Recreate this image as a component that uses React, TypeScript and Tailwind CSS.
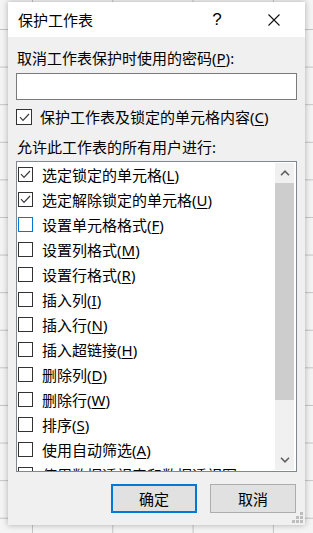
import React from 'react';

type Item = { text: string; key: string; checked?: boolean; focus?: boolean };

const items: Item[] = [
  { text: '选定锁定的单元格', key: 'L', checked: true },
  { text: '选定解除锁定的单元格', key: 'U', checked: true },
  { text: '设置单元格格式', key: 'F', focus: true },
  { text: '设置列格式', key: 'M' },
  { text: '设置行格式', key: 'R' },
  { text: '插入列', key: 'I' },
  { text: '插入行', key: 'N' },
  { text: '插入超链接', key: 'H' },
  { text: '删除列', key: 'D' },
  { text: '删除行', key: 'W' },
  { text: '排序', key: 'S' },
  { text: '使用自动筛选', key: 'A' },
  { text: '使用数据透视表和数据透视图', key: 'Z' },
  { text: '编辑对象', key: 'O' },
  { text: '编辑方案', key: 'E' },
];

const Check = () => (
  <svg width="11" height="9" viewBox="0 0 11 9">
    <path d="M1 4.2 L4 7.3 L10 1" stroke="#3a3a3a" strokeWidth="1.2" fill="none" />
  </svg>
);

const Box = ({ checked, focus, big }: { checked?: boolean; focus?: boolean; big?: boolean }) => (
  <span
    className={`${big ? 'w-[16px] h-[16px]' : 'w-[15px] h-[15px]'} ${
      focus ? 'border-[#0078d7]' : 'border-[#333333]'
    } border bg-white flex items-center justify-center shrink-0`}
  >
    {checked && <Check />}
  </span>
);

const Label = ({ text, k, tail = '' }: { text: string; k: string; tail?: string }) => (
  <span className="whitespace-nowrap">
    {text}(<u className="underline-offset-2">{k}</u>){tail}
  </span>
);

const Chevron = ({ up }: { up?: boolean }) => (
  <svg width="10" height="6" viewBox="0 0 10 6">
    <path
      d={up ? 'M1 5.2 L5 1.2 L9 5.2' : 'M1 0.8 L5 4.8 L9 0.8'}
      stroke="#606060"
      strokeWidth="1.6"
      fill="none"
    />
  </svg>
);

export default function App() {
  return (
    <div className="w-[313px] h-[533px] overflow-hidden bg-[#f4f4f4] [background-image:linear-gradient(to_bottom,#c4c4c4_1px,transparent_1px),linear-gradient(to_right,#c4c4c4_1px,transparent_1px)] [background-size:80.3px_37.6px] [background-position:32px_29px] pt-[2px] pl-[8px] font-['Noto_Sans','Noto_Sans_CJK_SC',sans-serif] text-[15px] text-black">
      <div className="relative w-[297px] h-[523px] bg-[#f0f0f0] shadow-[0_0_6px_rgba(0,0,0,0.3)] flex flex-col">
        {/* title bar */}
        <div className="h-[35px] bg-white flex items-center shrink-0">
          <span className="pl-[10px] leading-[20px]">保护工作表</span>
          <span className="ml-auto w-[46px] text-center text-[17px] leading-[20px] font-['Liberation_Sans',sans-serif]">?</span>
          <span className="w-[46px] ml-[11px] mr-[8px] flex items-center justify-center">
            <svg width="12" height="12" viewBox="0 0 12 12">
              <path d="M0.5 0.5 L11.5 11.5 M11.5 0.5 L0.5 11.5" stroke="#111" strokeWidth="1.1" />
            </svg>
          </span>
        </div>

        <div className="px-[8px] flex flex-col">
          <div className="mt-[11px] h-[20px] leading-[20px] pl-[1px]">
            <Label text="取消工作表保护时使用的密码" k="P" tail=":" />
          </div>
          <div className="mt-[5px] h-[27px] border border-[#7a7a7a] bg-white" />

          <div className="mt-[7px] h-[20px] flex items-center gap-[8px] leading-[20px]">
            <Box checked big />
            <Label text="保护工作表及锁定的单元格内容" k="C" />
          </div>

          <div className="mt-[10px] h-[20px] leading-[20px] pl-[1px]">允许此工作表的所有用户进行:</div>

          <div className="mt-[4px] h-[311px] border border-[#828790] bg-white flex overflow-hidden">
            <div className="flex-1 overflow-hidden">
              {items.map((it) => (
                <div key={it.key} className="h-[25px] flex items-center gap-[9px] pl-[1px] leading-[20px]">
                  <Box checked={it.checked} focus={it.focus} />
                  <Label text={it.text} k={it.key} />
                </div>
              ))}
            </div>
            <div className="w-[19px] my-[1px] mr-[2px] bg-[#f0f0f0] flex flex-col shrink-0">
              <div className="h-[20px] flex items-center justify-center">
                <Chevron up />
              </div>
              <div className="h-[217px] bg-[#cdcdcd]" />
              <div className="flex-1" />
              <div className="h-[20px] flex items-center justify-center">
                <Chevron />
              </div>
            </div>
          </div>

          <div className="mt-[12px] flex justify-end gap-[13px] pr-[1px]">
            <button className="w-[86px] h-[29px] border-2 border-[#0078d7] bg-[#e1e1e1] leading-[20px]">确定</button>
            <button className="w-[86px] h-[29px] border border-[#adadad] bg-[#e1e1e1] leading-[20px]">取消</button>
          </div>
        </div>

        {/* resize grip */}
        <svg className="absolute right-[2px] bottom-[2px]" width="11" height="11" viewBox="0 0 11 11">
          <g fill="#bdbdbd">
            <rect x="8" y="0" width="3" height="3" />
            <rect x="4" y="4" width="3" height="3" />
            <rect x="8" y="4" width="3" height="3" />
            <rect x="0" y="8" width="3" height="3" />
            <rect x="4" y="8" width="3" height="3" />
            <rect x="8" y="8" width="3" height="3" />
          </g>
        </svg>
      </div>
    </div>
  );
}
